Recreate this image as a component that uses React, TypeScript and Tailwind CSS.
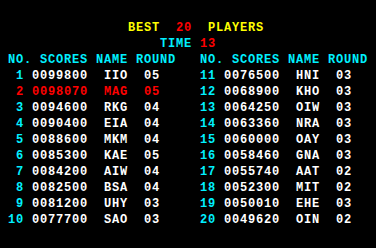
import React from 'react';

type Entry = { score: string; name: string; round: string };

const entries: Entry[] = [
  { score: '0099800', name: 'IIO', round: '05' },
  { score: '0098070', name: 'MAG', round: '05' },
  { score: '0094600', name: 'RKG', round: '04' },
  { score: '0090400', name: 'EIA', round: '04' },
  { score: '0088600', name: 'MKM', round: '04' },
  { score: '0085300', name: 'KAE', round: '05' },
  { score: '0084200', name: 'AIW', round: '04' },
  { score: '0082500', name: 'BSA', round: '04' },
  { score: '0081200', name: 'UHY', round: '03' },
  { score: '0077700', name: 'SAO', round: '03' },
  { score: '0076500', name: 'HNI', round: '03' },
  { score: '0068900', name: 'KHO', round: '03' },
  { score: '0064250', name: 'OIW', round: '03' },
  { score: '0063360', name: 'NRA', round: '03' },
  { score: '0060000', name: 'OAY', round: '03' },
  { score: '0058460', name: 'GNA', round: '03' },
  { score: '0055740', name: 'AAT', round: '02' },
  { score: '0052300', name: 'MIT', round: '02' },
  { score: '0050010', name: 'EHE', round: '03' },
  { score: '0049620', name: 'OIN', round: '02' },
];

// the player that just finished
const HIGHLIGHT = 2;

function Column({ start }: { start: number }) {
  return (
    <div className="w-[168px]">
      <div className="whitespace-pre text-[#00f0ff]">NO. SCORES NAME ROUND</div>
      {entries.slice(start, start + 10).map((e, i) => {
        const rank = start + i + 1;
        const hot = rank === HIGHLIGHT;
        return (
          <div key={rank} className={`flex whitespace-pre ${hot ? 'text-[#ff0000]' : 'text-white'}`}>
            <span className={`w-[16px] text-right ${hot ? '' : 'text-[#00f0ff]'}`}>{rank}</span>
            <span className="ml-[8px] w-[56px]">{e.score}</span>
            <span className="ml-[16px] w-[24px]">{e.name}</span>
            <span className="ml-[16px] w-[16px]">{e.round}</span>
          </div>
        );
      })}
    </div>
  );
}

export default function App() {
  return (
    <div
      className="h-[248px] w-[376px] overflow-hidden bg-black pt-[20px] text-[12px] leading-4 font-bold tracking-[0.8px]"
      style={{ fontFamily: '"Liberation Mono", "DejaVu Sans Mono", monospace' }}
    >
      <div className="whitespace-pre pl-[128px]">
        <span className="text-[#ffff00]">BEST  </span>
        <span className="text-[#ff0000]">20</span>
        <span className="text-[#ffff00]">  PLAYERS</span>
      </div>
      <div className="whitespace-pre pl-[160px]">
        <span className="text-[#00f0ff]">TIME </span>
        <span className="text-[#ff0000]">13</span>
      </div>
      <div className="flex gap-[24px] pl-[8px]">
        <Column start={0} />
        <Column start={10} />
      </div>
    </div>
  );
}
